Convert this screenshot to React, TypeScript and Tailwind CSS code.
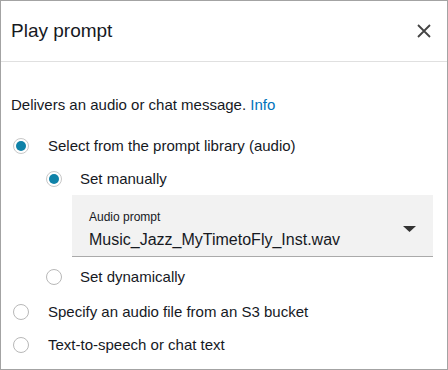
import React from "react";

function Radio({ checked }: { checked?: boolean }) {
  return checked ? (
    <span className="flex h-[16px] w-[16px] shrink-0 items-center justify-center rounded-full border border-[#c8c8c8] bg-white">
      <span className="h-[10px] w-[10px] rounded-full bg-[#0f82a8]" />
    </span>
  ) : (
    <span className="h-[16px] w-[16px] shrink-0 rounded-full border border-[#b8b8b8] bg-white" />
  );
}

function Option({ checked, label, indent }: { checked?: boolean; label: string; indent?: boolean }) {
  return (
    <div className={`flex h-[18px] items-center ${indent ? "pl-[45px]" : "pl-[12px]"}`}>
      <Radio checked={checked} />
      <span className={`text-[15px] leading-[18px] text-[#16191f] ${indent ? "ml-[18px]" : "ml-[19px]"}`}>{label}</span>
    </div>
  );
}

export default function App() {
  return (
    <div
      className="h-[370px] w-[448px] overflow-hidden border border-[#a3a3a3] bg-white"
      style={{ fontFamily: '"Liberation Sans", Arial, sans-serif' }}
    >
      <div className="flex h-[61px] items-center justify-between border-b border-[#e0e0e0] pl-[10px] pr-[14px]">
        <span className="text-[19px] leading-[24px] text-[#16191f]">Play prompt</span>
        <svg width="16" height="16" viewBox="0 0 16 16" className="mr-[1px]">
          <path d="M2 2 L14 14 M14 2 L2 14" stroke="#444" strokeWidth="1.8" />
        </svg>
      </div>
      <div className="pt-[34px] pl-[10px] text-[15px] leading-[18px] text-[#16191f]">
        Delivers an audio or chat message. <span className="text-[#0073bb]">Info</span>
      </div>
      <div className="mt-[23px] flex flex-col">
        <Option checked label="Select from the prompt library (audio)" />
        <div className="mt-[15px]">
          <Option checked indent label="Set manually" />
        </div>
        <div className="ml-[71px] mr-[14px] mt-[7px] flex h-[62px] items-start border-b border-[#aaa] bg-[#f2f2f2] pl-[17px] pr-[17px] pt-[15px]">
          <div className="flex flex-1 flex-col">
            <span className="text-[12px] leading-[14px] text-[#16191f]">Audio prompt</span>
            <span className="mt-[6px] text-[16px] leading-[20px] text-[#16191f]">Music_Jazz_MyTimetoFly_Inst.wav</span>
          </div>
          <svg width="13" height="6" viewBox="0 0 13 6" className="mt-[16px]">
            <path d="M0 0 L13 0 L6.5 6 Z" fill="#333" />
          </svg>
        </div>
        <div className="mt-[11px]">
          <Option indent label="Set dynamically" />
        </div>
        <div className="mt-[17px]">
          <Option label="Specify an audio file from an S3 bucket" />
        </div>
        <div className="mt-[15px]">
          <Option label="Text-to-speech or chat text" />
        </div>
      </div>
    </div>
  );
}
